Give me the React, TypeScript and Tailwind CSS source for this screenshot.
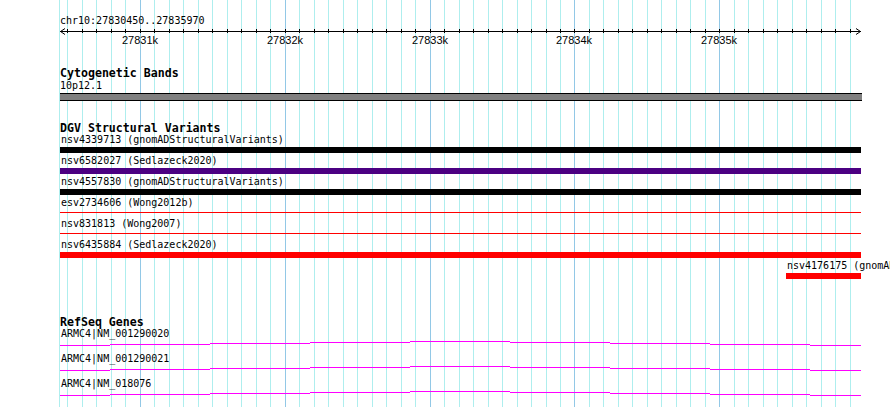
import React from 'react';

const START = 27830450;
const END = 27835970;
const LEFT = 60;
const WIDTH = 800;

const toX = (bp: number) => LEFT + ((bp - START) * WIDTH) / (END - START);

// every 100bp inside the view
const ticks = Array.from({ length: 55 }, (_, k) => {
  const bp = 27830500 + k * 100;
  return { bp, x: Math.round(toX(bp)), major: bp % 1000 === 0 };
});

interface Variant {
  name: string;
  kind: 'bar' | 'line';
  color: string;
  offset?: number;
  width?: number;
}

const variants: Variant[] = [
  { name: 'nsv4339713 (gnomADStructuralVariants)', kind: 'bar', color: 'bg-black' },
  { name: 'nsv6582027 (Sedlazeck2020)', kind: 'bar', color: 'bg-[#4b0082]' },
  { name: 'nsv4557830 (gnomADStructuralVariants)', kind: 'bar', color: 'bg-black' },
  { name: 'esv2734606 (Wong2012b)', kind: 'line', color: 'bg-[#ff0000]' },
  { name: 'nsv831813 (Wong2007)', kind: 'line', color: 'bg-[#ff0000]' },
  { name: 'nsv6435884 (Sedlazeck2020)', kind: 'bar', color: 'bg-[#ff0000]' },
  { name: 'nsv4176175 (gnomADStructuralVariants)', kind: 'bar', color: 'bg-[#ff0000]', offset: 726, width: 75 },
];

const genes = ['ARMC4|NM_001290020', 'ARMC4|NM_001290021', 'ARMC4|NM_018076'];

// intron "hat": stepped segments rising to the middle and back down
const hatSteps = [
  [60, 110, 0],
  [110, 210, 1],
  [210, 310, 2],
  [310, 410, 3],
  [410, 510, 4],
  [510, 610, 3],
  [610, 710, 2],
  [710, 810, 1],
  [810, 861, 0],
];

function GridLines() {
  return (
    <svg className="absolute inset-0" width={890} height={407} shapeRendering="crispEdges" aria-hidden="true">
      <rect x={59} y={0} width={1} height={407} fill="#aeeeee" />
      {ticks.map((t) => (
        <rect key={t.bp} x={t.x} y={0} width={1} height={407} fill={t.major ? '#92c8e6' : '#aeeeee'} />
      ))}
    </svg>
  );
}

function Ruler() {
  return (
    <svg width={870} height={21} className="-ml-[60px] block" shapeRendering="crispEdges">
      <rect x={60} y={4} width={801} height={1} fill="#000" />
      {ticks.map((t) => (
        <rect key={t.bp} x={t.x} y={2} width={1} height={4} fill="#000" />
      ))}
      <polyline points="65,1.5 60.5,4.5 65,7.5" fill="none" stroke="#000" strokeWidth={1} shapeRendering="auto" />
      <polyline points="856,1.5 860.5,4.5 856,7.5" fill="none" stroke="#000" strokeWidth={1} shapeRendering="auto" />
      {ticks
        .filter((t) => t.major)
        .map((t) => (
          <text
            key={t.bp}
            x={t.x}
            y={17}
            textAnchor="middle"
            fontFamily="'Liberation Sans', Arial, sans-serif"
            fontSize={11}
            fill="#000"
          >
            {t.bp / 1000}k
          </text>
        ))}
    </svg>
  );
}

export default function App() {
  return (
    <div className="relative w-[890px] h-[407px] overflow-hidden bg-white text-black font-['DejaVu_Sans_Mono',monospace]">
      <GridLines />

      <div className="relative flex flex-col pl-[60px]">
        {/* Overview ruler */}
        <div className="mt-[15px] h-[12px] text-[10px] leading-[12px] whitespace-nowrap">chr10:27830450..27835970</div>
        <Ruler />

        {/* Cytogenetic bands */}
        <div className="mt-[18px] h-[14px] text-[11.6px] leading-[14px] font-bold whitespace-nowrap">Cytogenetic Bands</div>
        <div className="h-[12px] text-[10px] leading-[12px]">10p12.1</div>
        <div className="mt-px w-[802px] h-[8px] bg-[#808080] border-y border-black" />

        {/* DGV */}
        <div className="mt-[20px] h-[13px] text-[11.6px] leading-[14px] font-bold whitespace-nowrap">DGV Structural Variants</div>
        {variants.map((v) => (
          <div key={v.name} className="h-[21px] flex flex-col" style={v.offset ? { marginLeft: v.offset } : undefined}>
            <div className="h-[12px] text-[10px] leading-[12px] whitespace-nowrap pl-px">{v.name}</div>
            <div className="mt-px h-[6px] w-[801px]" style={v.width ? { width: v.width } : undefined}>
              {v.kind === 'bar' ? (
                <div className={`h-full ${v.color}`} />
              ) : (
                <div className={`mt-[2px] h-px ${v.color}`} />
              )}
            </div>
          </div>
        ))}

        {/* RefSeq */}
        <div className="mt-[35px] h-[12px] text-[11.6px] leading-[12px] font-bold whitespace-nowrap">RefSeq Genes</div>
        {genes.map((g) => (
          <div key={g} className="h-[25px] flex flex-col">
            <div className="h-[12px] text-[10px] leading-[12px] whitespace-nowrap pl-px">{g}</div>
            <svg width={802} height={13} className="-ml-[60px] block overflow-visible" shapeRendering="crispEdges">
              {hatSteps.map(([a, b, lvl]) => (
                <rect key={a} x={a} y={5 - lvl} width={b - a} height={1} fill="#ff00ff" />
              ))}
            </svg>
          </div>
        ))}
      </div>
    </div>
  );
}
